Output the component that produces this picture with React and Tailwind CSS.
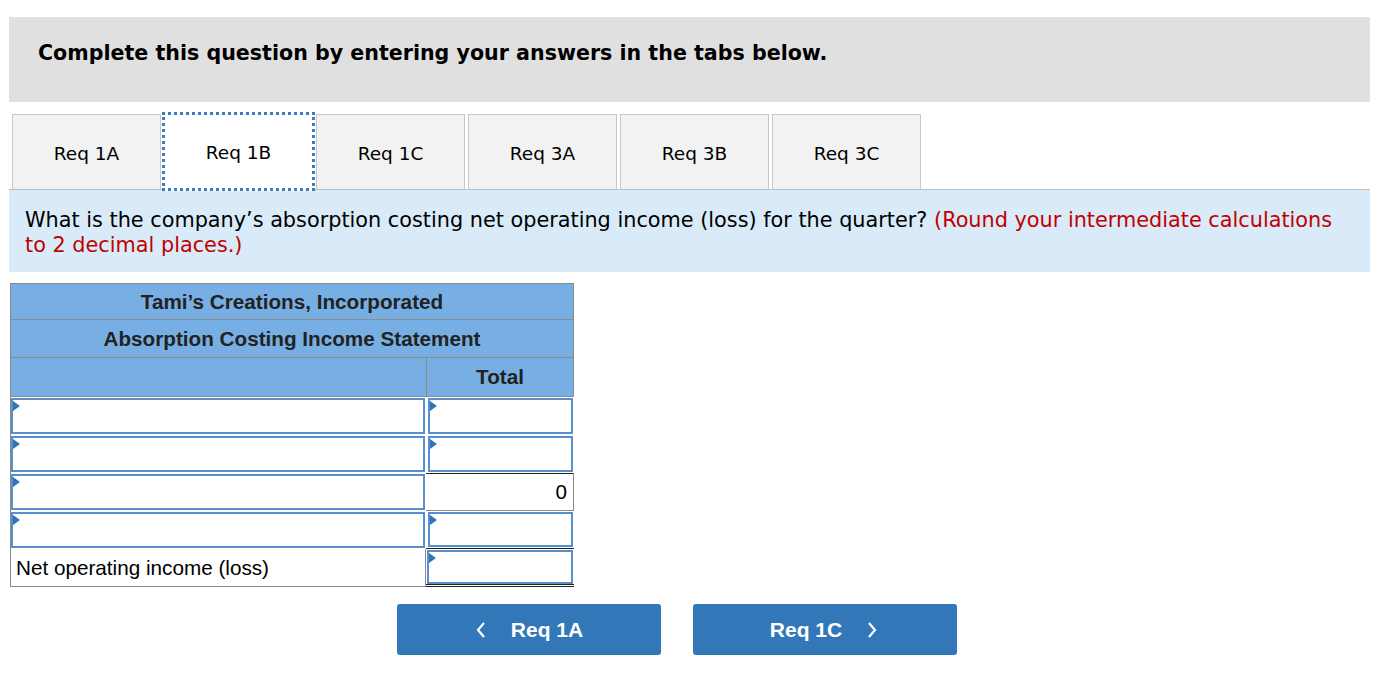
import React from 'react';

const tabs = ['Req 1A', 'Req 1B', 'Req 1C', 'Req 3A', 'Req 3B', 'Req 3C'];

const Marker = () => (
    <span className="absolute left-0 top-[1px] w-0 h-0 border-t-[5px] border-b-[5px] border-l-[7px] border-t-transparent border-b-transparent border-l-[#2f74b9]" />
);

const InputBox = () => (
    <div className="relative h-full border-2 border-[#5a8fcd] bg-white">
        <Marker />
    </div>
);

const App = () => {
    return (
        <div className="w-[1390px] h-[698px] bg-white pt-[17px] pl-[9px] pr-[20px]" style={{ fontFamily: 'Verdana, "DejaVu Sans", sans-serif' }}>
            {/* Instruction banner */}
            <div className="h-[85px] bg-[#e0e0e0] pl-[29px] pt-[24px]">
                <h2 className="text-[20.6px] leading-[24px] font-bold text-black">Complete this question by entering your answers in the tabs below.</h2>
            </div>

            {/* Tabs */}
            <div className="flex items-end gap-[3px] pl-[3px] mt-[12px] h-[75px]">
                {tabs.map((tab, i) => (
                    <div
                        key={tab}
                        className={
                            i === 1
                                ? 'relative z-10 -ml-[2px] -mr-[2px] -mb-[2px] w-[153px] h-[79px] pt-[2px] bg-white border-[3px] border-dotted border-[#3b7cc0] flex items-center justify-center text-[18.5px] text-black'
                                : 'w-[149px] h-[75px] pt-[3px] bg-[#f2f2f2] border border-b-0 border-[#c8c8c8] flex items-center justify-center text-[18.5px] text-black'
                        }
                    >
                        {tab}
                    </div>
                ))}
            </div>

            {/* Question */}
            <div className="bg-[#d9ebf9] border-t border-[#bdbdbd] h-[83px] px-[16px] pt-[18px] text-[20.8px] leading-[25px] text-black">
                What is the company’s absorption costing net operating income (loss) for the quarter?{' '}
                <span className="text-[#c00000]">(Round your intermediate calculations to 2 decimal places.)</span>
            </div>

            {/* Income statement */}
            <div className="mt-[11px] ml-[1px] w-[564px] text-[20.7px] text-[#222]" style={{ fontFamily: 'Arial, "Liberation Sans", sans-serif' }}>
                <div className="h-[37px] bg-[#77afe4] border border-[#8a8a8a] flex items-center justify-center font-bold">
                    Tami’s Creations, Incorporated
                </div>
                <div className="h-[38px] bg-[#77afe4] border border-t-0 border-[#8a8a8a] flex items-center justify-center font-bold">
                    Absorption Costing Income Statement
                </div>
                <div className="h-[39px] bg-[#77afe4] border border-t-0 border-[#8a8a8a] grid grid-cols-[416px_1fr]">
                    <div className="border-r border-[#8a8a8a]" />
                    <div className="flex items-center justify-center font-bold">Total</div>
                </div>

                {/* Rows */}
                <div className="border-l border-[#8a8a8a]">
                    <div className="h-[38px] grid grid-cols-[415px_1fr]">
                        <div className="p-[1px] pl-0"><InputBox /></div>
                        <div className="p-[1px] pl-[2px]"><InputBox /></div>
                    </div>
                    <div className="h-[38px] grid grid-cols-[415px_1fr]">
                        <div className="p-[1px] pl-0"><InputBox /></div>
                        <div className="p-[1px] pl-[2px]"><InputBox /></div>
                    </div>
                    <div className="h-[38px] grid grid-cols-[415px_1fr]">
                        <div className="p-[1px] pl-0"><InputBox /></div>
                        <div className="border-t border-b border-[#222] border-b-[#8a8a8a] border-r border-r-[#8a8a8a] bg-white flex items-center justify-end pr-[6px] text-black">0</div>
                    </div>
                    <div className="h-[38px] grid grid-cols-[415px_1fr]">
                        <div className="p-[1px] pl-0"><InputBox /></div>
                        <div className="p-[1px] pl-[2px] border-b border-[#222]"><InputBox /></div>
                    </div>
                    <div className="h-[38px] grid grid-cols-[415px_1fr]">
                        <div className="border-b border-r border-[#8a8a8a] flex items-center pl-[5px] text-black">Net operating income (loss)</div>
                        <div className="pt-[1px] pl-[1px] pr-[1px] border-b-[3px] border-double border-[#222]">
                            <InputBox />
                        </div>
                    </div>
                </div>
            </div>

            {/* Navigation */}
            <div className="flex gap-[32px] ml-[388px] mt-[17px]" style={{ fontFamily: 'Arial, "Liberation Sans", sans-serif' }}>
                <button className="w-[264px] h-[51px] bg-[#3278b8] rounded-[3px] text-white text-[21px] font-bold flex items-center justify-center gap-[24px]">
                    <svg width="12" height="18" viewBox="0 0 12 18" fill="none" stroke="white" strokeWidth="2.2">
                        <path d="M9 2 L3 9 L9 16" />
                    </svg>
                    Req 1A
                </button>
                <button className="w-[264px] h-[51px] bg-[#3278b8] rounded-[3px] text-white text-[21px] font-bold flex items-center justify-center gap-[24px] pr-[2px]">
                    Req 1C
                    <svg width="12" height="18" viewBox="0 0 12 18" fill="none" stroke="white" strokeWidth="2.2">
                        <path d="M3 2 L9 9 L3 16" />
                    </svg>
                </button>
            </div>
        </div>
    );
};

export default App;
